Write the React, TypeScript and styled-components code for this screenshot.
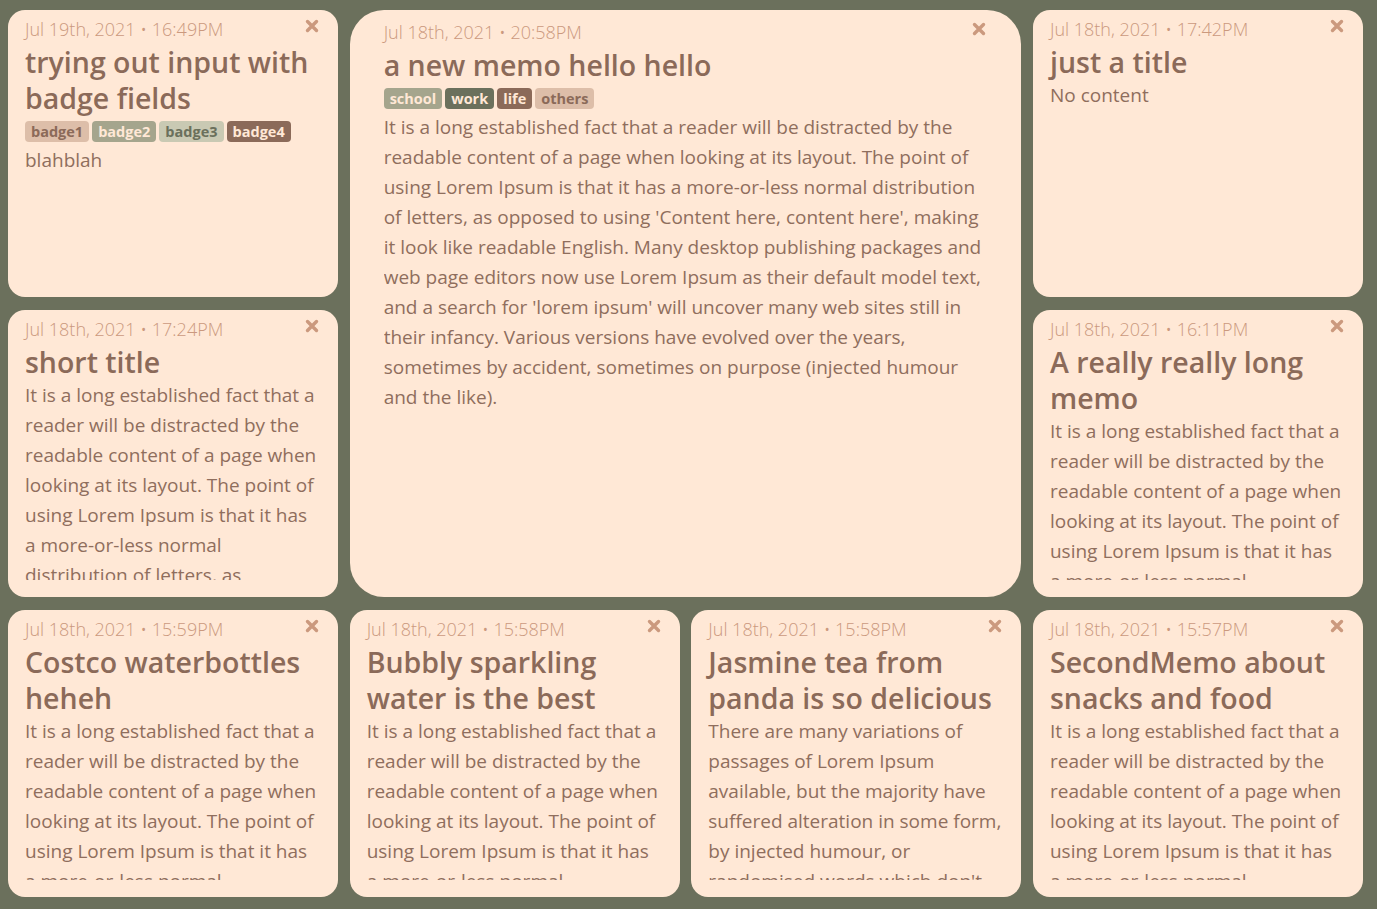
import React from "react";
import styled, { createGlobalStyle } from "styled-components";

const GlobalStyle = createGlobalStyle`
  body {
    margin: 0;
    background: #6b705c;
    font-family: "Open Sans", "Noto Sans", sans-serif;
  }
`;

const Board = styled.div`
  display: grid;
  grid-template-columns: repeat(4, 330px);
  grid-auto-rows: 287px;
  column-gap: 11.67px;
  row-gap: 13px;
  padding: 10px 0 12px 8px;
`;

const Card = styled.div<{ $big?: boolean }>`
  display: flex;
  flex-direction: column;
  min-height: 0;
  background: #ffe8d6;
  border-radius: ${(p) => (p.$big ? "34px" : "17px")};
  padding: ${(p) => (p.$big ? "9px 35px 17px 34px" : "6px 19px 17px 17px")};
  grid-column: ${(p) => (p.$big ? "span 2" : "auto")};
  grid-row: ${(p) => (p.$big ? "span 2" : "auto")};
  box-sizing: border-box;
  color: #8b6a59;
`;

const Header = styled.div`
  display: flex;
  justify-content: space-between;
  align-items: flex-start;
`;

const Date = styled.span`
  font-size: 18px;
  font-weight: 300;
  line-height: 26px;
  color: #cb997e;
`;

const Close = styled.button`
  border: none;
  background: none;
  padding: 0;
  margin-top: 3px;
  width: 14px;
  height: 14px;
  cursor: pointer;
  display: flex;
`;

const Title = styled.h2`
  margin: 2px 0 0;
  font-size: 28.5px;
  font-weight: 600;
  line-height: 36px;
  color: #8b6a59;
`;

const Badges = styled.div`
  display: flex;
  gap: 3px;
  margin: 5px 0 3px;
`;

const Badge = styled.span<{ $bg: string; $fg: string }>`
  background: ${(p) => p.$bg};
  color: ${(p) => p.$fg};
  font-size: 14.5px;
  font-weight: 700;
  line-height: 21px;
  padding: 0 6px;
  border-radius: 4px;
`;

const Body = styled.p`
  margin: 0;
  flex: 1;
  min-height: 0;
  overflow: hidden;
  font-size: 19px;
  line-height: 30px;
  color: #8f6e5d;
`;

const lorem =
  "It is a long established fact that a reader will be distracted by the readable content of a page when looking at its layout. The point of using Lorem Ipsum is that it has a more-or-less normal distribution of letters, as opposed to using 'Content here, content here', making it look like readable English. Many desktop publishing packages and web page editors now use Lorem Ipsum as their default model text, and a search for 'lorem ipsum' will uncover many web sites still in their infancy. Various versions have evolved over the years, sometimes by accident, sometimes on purpose (injected humour and the like).";

const variations =
  "There are many variations of passages of Lorem Ipsum available, but the majority have suffered alteration in some form, by injected humour, or randomised words which don't look even slightly believable.";

const badgeColors: Record<string, [string, string]> = {
  badge1: ["#ddbea9", "#8b6a59"],
  badge2: ["#a5a58d", "#ffe8d6"],
  badge3: ["#c9c9b3", "#6b705c"],
  badge4: ["#8b6a59", "#ffe8d6"],
  school: ["#a5a58d", "#ffe8d6"],
  work: ["#6b705c", "#ffe8d6"],
  life: ["#8b6a59", "#ffe8d6"],
  others: ["#ddbea9", "#8b6a59"],
};

type Memo = {
  id: number;
  date: string;
  title: string;
  body: string;
  badges?: string[];
  big?: boolean;
};

const memos: Memo[] = [
  {
    id: 1,
    date: "Jul 19th, 2021 • 16:49PM",
    title: "trying out input with badge fields",
    badges: ["badge1", "badge2", "badge3", "badge4"],
    body: "blahblah",
  },
  {
    id: 2,
    date: "Jul 18th, 2021 • 20:58PM",
    title: "a new memo hello hello",
    badges: ["school", "work", "life", "others"],
    body: lorem,
    big: true,
  },
  { id: 3, date: "Jul 18th, 2021 • 17:42PM", title: "just a title", body: "No content" },
  { id: 4, date: "Jul 18th, 2021 • 17:24PM", title: "short title", body: lorem },
  { id: 5, date: "Jul 18th, 2021 • 16:11PM", title: "A really really long memo", body: lorem },
  { id: 6, date: "Jul 18th, 2021 • 15:59PM", title: "Costco waterbottles heheh", body: lorem },
  { id: 7, date: "Jul 18th, 2021 • 15:58PM", title: "Bubbly sparkling water is the best", body: lorem },
  { id: 8, date: "Jul 18th, 2021 • 15:58PM", title: "Jasmine tea from panda is so delicious", body: variations },
  { id: 9, date: "Jul 18th, 2021 • 15:57PM", title: "SecondMemo about snacks and food", body: lorem },
];

function CloseIcon() {
  return (
    <svg width="14" height="14" viewBox="0 0 14 14">
      <path
        d="M2.5 2.5 L11.5 11.5 M11.5 2.5 L2.5 11.5"
        stroke="#cb997e"
        strokeWidth="3.4"
        strokeLinecap="round"
      />
    </svg>
  );
}

function MemoCard({ memo }: { memo: Memo }) {
  return (
    <Card $big={memo.big}>
      <Header>
        <Date>{memo.date}</Date>
        <Close aria-label="delete">
          <CloseIcon />
        </Close>
      </Header>
      <Title>{memo.title}</Title>
      {memo.badges && (
        <Badges>
          {memo.badges.map((b) => (
            <Badge key={b} $bg={badgeColors[b][0]} $fg={badgeColors[b][1]}>
              {b}
            </Badge>
          ))}
        </Badges>
      )}
      <Body>{memo.body}</Body>
    </Card>
  );
}

export default function App() {
  return (
    <>
      <GlobalStyle />
      <Board>
        {memos.map((m) => (
          <MemoCard key={m.id} memo={m} />
        ))}
      </Board>
    </>
  );
}
